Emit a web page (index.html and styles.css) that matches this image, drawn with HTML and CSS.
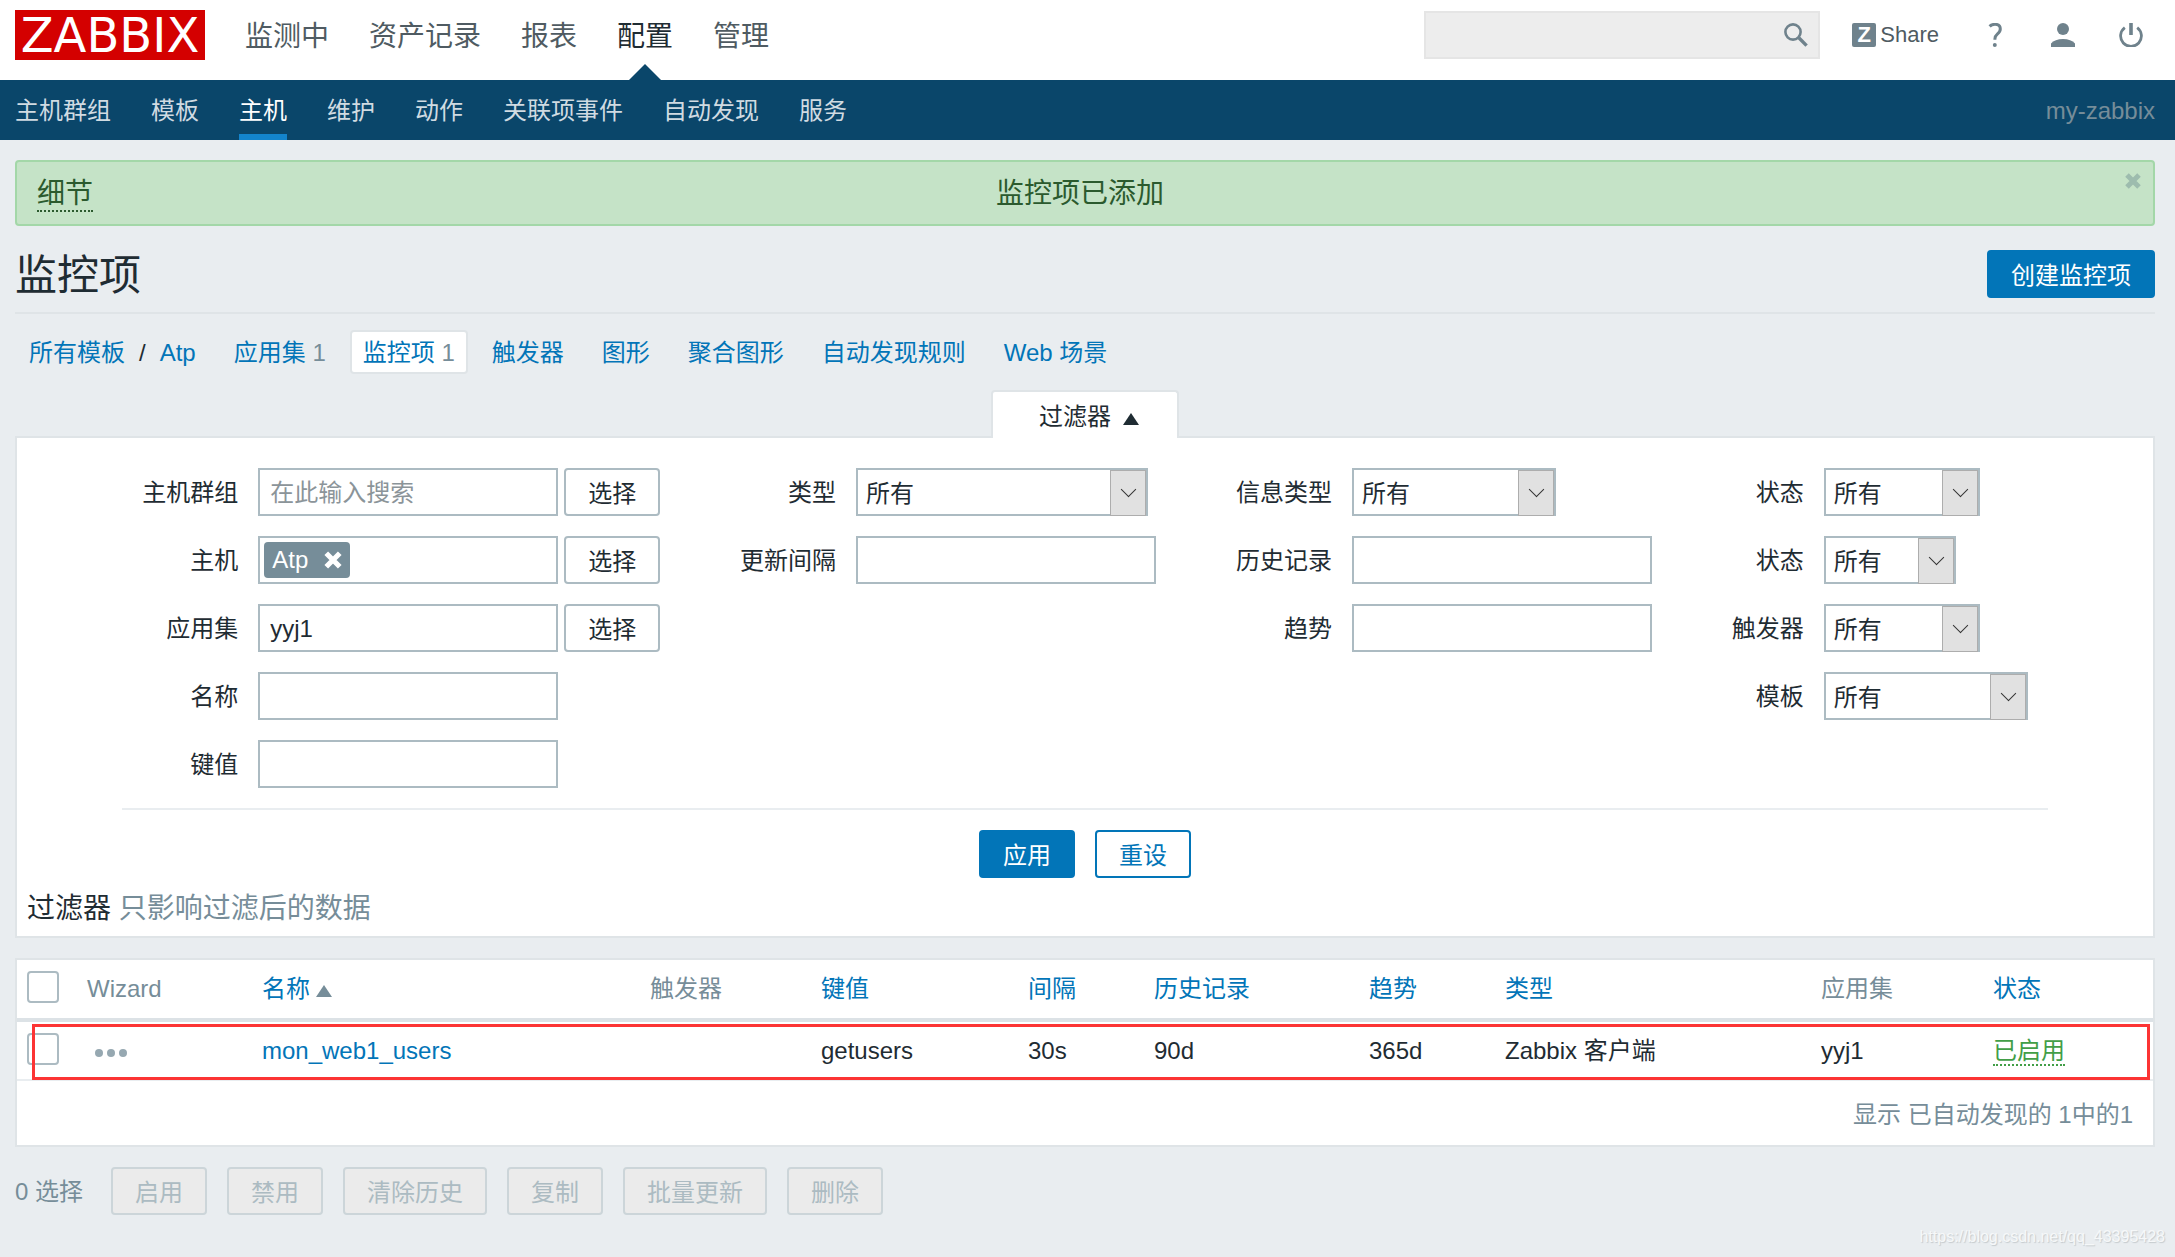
FILE: index.html
```html
<!DOCTYPE html>
<html lang="zh-CN">
<head>
<meta charset="utf-8">
<title>监控项</title>
<meta name="viewport" content="width=device-width, initial-scale=1">
<link rel="stylesheet" href="styles.css">
</head>
<body>
<header>
  <div class="top">
    <a class="logo" href="#">ZABBIX</a>
    <nav class="main-nav" aria-label="主菜单">
      <a href="#">监测中</a>
      <a href="#">资产记录</a>
      <a href="#">报表</a>
      <a class="selected" href="#">配置</a>
      <a href="#">管理</a>
    </nav>
    <form class="search">
      <input type="text" aria-label="搜索">
      <button type="button" aria-label="搜索">
        <svg viewBox="0 0 24 24" width="24" height="24"><circle cx="9" cy="9" r="7.6" fill="none" stroke="currentColor" stroke-width="2.6"/><path d="M14.8 14.8L22.6 22.6" stroke="currentColor" stroke-width="3.4"/></svg>
      </button>
    </form>
    <div class="tools">
      <a class="share" href="#"><span class="z">Z</span>Share</a>
      <a href="#" aria-label="帮助"><svg viewBox="0 0 24 24" width="24" height="24"><path d="M6.6 3.4C8 2 9.900 1.300 12 1.300c3.400 0 5.300 1.800 5.300 4.600 0 2.500-1.300 3.800-3 5.200-1.700 1.400-2.400 2.500-2.400 4.900v.8" fill="none" stroke="currentColor" stroke-width="3"/><circle cx="11.800" cy="22" r="2" fill="currentColor"/></svg></a>
      <a href="#" aria-label="用户"><svg viewBox="0 0 24 24" width="24" height="24" fill="currentColor"><circle cx="12" cy="6" r="6"/><path d="M0 24v-3.400C2.400 17.500 6.800 16 12 16s9.600 1.500 12 4.600V24z"/></svg></a>
      <a href="#" aria-label="退出"><svg viewBox="0 0 24 24" width="24" height="24" fill="none" stroke="currentColor"><path d="M12 0v12" stroke-width="3.600"/><path d="M5.800 4.600A10.400 10.400 0 1 0 18.200 4.600" stroke-width="2.800"/></svg></a>
    </div>
  </div>
  <nav class="sub-nav" aria-label="配置">
    <a href="#">主机群组</a>
    <a href="#">模板</a>
    <a class="selected" href="#">主机</a>
    <a href="#">维护</a>
    <a href="#">动作</a>
    <a href="#">关联项事件</a>
    <a href="#">自动发现</a>
    <a href="#">服务</a>
    <span class="server-name">my-zabbix</span>
  </nav>
</header>

<main>
  <div class="message">
    <a class="details" href="#">细节</a>
    <span class="message-text">监控项已添加</span>
    <button class="close" type="button" aria-label="关闭"><svg viewBox="0 0 16 16" width="16" height="16"><path d="M2 2l12 12M14 2L2 14" stroke="currentColor" stroke-width="5"/></svg></button>
  </div>

  <div class="title-row">
    <h1>监控项</h1>
    <button class="btn primary" type="button">创建监控项</button>
  </div>

  <nav class="crumbs" aria-label="主机导航">
    <span class="path"><a href="#">所有模板</a><span>/</span><a href="#">Atp</a></span>
    <span><a href="#">应用集</a> <sup>1</sup></span>
    <span class="current"><a href="#">监控项</a> <sup>1</sup></span>
    <a href="#">触发器</a>
    <a href="#">图形</a>
    <a href="#">聚合图形</a>
    <a href="#">自动发现规则</a>
    <a href="#">Web 场景</a>
  </nav>

  <div class="filter-tab"><button type="button">过滤器<i class="up"></i></button></div>
  <form class="filter">
    <div class="filter-grid">
      <div class="fields">
        <label for="groups">主机群组</label>
        <div class="pick"><input id="groups" type="text" placeholder="在此输入搜索"><button class="btn" type="button">选择</button></div>
        <label for="hosts">主机</label>
        <div class="pick">
          <div class="multi"><span class="tag">Atp<button type="button" aria-label="移除 Atp"><svg viewBox="0 0 16 16" width="18" height="18"><path d="M2 2l12 12M14 2L2 14" stroke="currentColor" stroke-width="4.600"/></svg></button></span><input id="hosts" type="text"></div>
          <button class="btn" type="button">选择</button>
        </div>
        <label for="app">应用集</label>
        <div class="pick"><input id="app" type="text" value="yyj1"><button class="btn" type="button">选择</button></div>
        <label for="name">名称</label>
        <input id="name" type="text">
        <label for="key">键值</label>
        <input id="key" type="text">
      </div>
      <div class="fields">
        <label for="type">类型</label>
        <span class="select wide"><select id="type"><option>所有</option></select></span>
        <label for="delay">更新间隔</label>
        <input id="delay" type="text">
      </div>
      <div class="fields">
        <label for="info">信息类型</label>
        <span class="select medium"><select id="info"><option>所有</option></select></span>
        <label for="history">历史记录</label>
        <input id="history" type="text">
        <label for="trends">趋势</label>
        <input id="trends" type="text">
      </div>
      <div class="fields">
        <label for="state">状态</label>
        <span class="select small"><select id="state"><option>所有</option></select></span>
        <label for="status">状态</label>
        <span class="select tiny"><select id="status"><option>所有</option></select></span>
        <label for="triggers">触发器</label>
        <span class="select small"><select id="triggers"><option>所有</option></select></span>
        <label for="templates">模板</label>
        <span class="select medium"><select id="templates"><option>所有</option></select></span>
      </div>
    </div>
    <div class="filter-actions">
      <button class="btn primary" type="button">应用</button>
      <button class="btn link" type="button">重设</button>
    </div>
    <p class="note"><b>过滤器</b> 只影响过滤后的数据</p>
  </form>

  <div class="list">
    <table>
      <colgroup><col class="c-check"><col class="c-wizard"><col class="c-name"><col class="c-trig"><col class="c-key"><col class="c-delay"><col class="c-hist"><col class="c-trend"><col class="c-type"><col class="c-app"><col class="c-status"></colgroup>
      <thead>
        <tr>
          <th><input type="checkbox" aria-label="全选"></th>
          <th>Wizard</th>
          <th><a href="#">名称<i class="up"></i></a></th>
          <th>触发器</th>
          <th><a href="#">键值</a></th>
          <th><a href="#">间隔</a></th>
          <th><a href="#">历史记录</a></th>
          <th><a href="#">趋势</a></th>
          <th><a href="#">类型</a></th>
          <th>应用集</th>
          <th><a href="#">状态</a></th>
        </tr>
      </thead>
      <tbody>
        <tr>
          <td><input type="checkbox" aria-label="mon_web1_users"></td>
          <td><button class="dots" type="button" aria-label="菜单"><svg viewBox="0 0 34 8" width="34" height="8" fill="currentColor"><circle cx="4" cy="4" r="4"/><circle cx="16" cy="4" r="4"/><circle cx="28" cy="4" r="4"/></svg></button></td>
          <td><a href="#">mon_web1_users</a></td>
          <td></td>
          <td>getusers</td>
          <td>30s</td>
          <td>90d</td>
          <td>365d</td>
          <td>Zabbix 客户端</td>
          <td>yyj1</td>
          <td><a class="enabled" href="#">已启用</a></td>
        </tr>
      </tbody>
    </table>
    <div class="list-footer">显示 已自动发现的 1中的1</div>
    <div class="highlight"></div>
  </div>

  <div class="actions">
    <span class="count">0 选择</span>
    <button class="btn" type="button" disabled>启用</button>
    <button class="btn" type="button" disabled>禁用</button>
    <button class="btn" type="button" disabled>清除历史</button>
    <button class="btn" type="button" disabled>复制</button>
    <button class="btn" type="button" disabled>批量更新</button>
    <button class="btn" type="button" disabled>删除</button>
  </div>
</main>
<div class="watermark">https://blog.csdn.net/qq_43395428</div>
</body>
</html>
```
FILE: styles.css
```css
* { box-sizing: border-box; }
body {
  margin: 0;
  min-height: 100vh;
  position: relative;
  background: #e9edf0;
  color: #1f2c33;
  font: 24px/32px "Liberation Sans", "Noto Sans CJK SC", sans-serif;
}
a { color: #0275b8; text-decoration: none; }
button, input, select { font: inherit; color: inherit; margin: 0; }
svg { display: block; }

/* header */
.top {
  display: flex;
  align-items: center;
  height: 80px;
  padding: 0 32px 10px 15px;
  background: #fff;
}
.logo {
  width: 190px;
  height: 50px;
  background: #d40000;
  color: #fff;
  font: 48px/50px "DejaVu Sans", sans-serif;
  text-align: center;
}
.main-nav { display: flex; gap: 40px; margin-left: 40px; padding-top: 4px; font-size: 28px; line-height: 70px; }
.main-nav a { position: relative; color: #4f5b62; }
.main-nav .selected { color: #1f2c33; }
.main-nav .selected::after {
  content: "";
  position: absolute;
  left: 50%;
  bottom: -8px;
  margin-left: -16px;
  border: solid transparent;
  border-width: 0 16px 16px;
  border-bottom-color: #0a466a;
}
.search {
  display: flex;
  align-items: center;
  width: 396px;
  height: 48px;
  margin-left: auto;
  padding-right: 10px;
  background: #ededed;
  border: 2px solid #e5e5e5;
}
.search input { flex: 1; min-width: 0; border: 0; background: none; }
.search button { padding: 0; border: 0; background: none; color: #6f828c; }
.tools { display: flex; align-items: center; gap: 44px; margin-left: 32px; }
.tools a { color: #6f828c; }
.tools .share { display: flex; align-items: center; gap: 4px; font-size: 22px; line-height: 24px; color: #4f5b62; }
.z {
  width: 24px;
  height: 24px;
  border-radius: 2px;
  background: #6f828c;
  color: #fff;
  font-weight: bold;
  text-align: center;
}
.sub-nav {
  display: flex;
  gap: 40px;
  height: 60px;
  padding: 0 20px 0 15px;
  background: #0a466a;
  line-height: 62px;
}
.sub-nav a { color: #d0dbe2; }
.sub-nav .selected { color: #fff; box-shadow: inset 0 -6px #1384cc; }
.server-name { margin-left: auto; color: #768d99; }

/* message and title */
main { padding: 20px 20px 20px 15px; }
.message {
  display: flex;
  justify-content: center;
  align-items: center;
  position: relative;
  height: 66px;
  padding: 2px 10px 0 0;
  border: 2px solid #a3d7a8;
  border-radius: 4px;
  background: #c5e3c7;
  color: #2b5a2e;
  font-size: 28px;
}
.details {
  position: absolute;
  left: 20px;
  top: 16px;
  color: inherit;
  border-bottom: 2px dotted;
}
.close { position: absolute; right: 12px; top: 11px; padding: 0; border: 0; background: none; color: #9dbcae; }
.title-row {
  display: flex;
  justify-content: space-between;
  align-items: center;
  height: 88px;
  padding-top: 10px;
  border-bottom: 2px solid #dfe4e7;
}
h1 { margin: 0; padding-top: 4px; font-size: 42px; line-height: 48px; font-weight: normal; }
.btn {
  height: 48px;
  padding: 4px 22px 0;
  border: 2px solid #acbbc2;
  border-radius: 4px;
  background: #fff;
  line-height: 32px;
  white-space: nowrap;
}
.primary { background: #0275b8; border-color: #0275b8; color: #fff; }
.link { border-color: #0275b8; color: #0275b8; }
.btn:disabled { background: #ebebeb; border-color: #ccd5d9; color: #acbbc2; }

/* breadcrumbs */
.crumbs { display: flex; align-items: center; gap: 38px; padding: 16px 14px; }
.crumbs > * { padding-top: 2px; }
.path { display: flex; gap: 14px; }
sup { font-size: inherit; line-height: inherit; vertical-align: baseline; color: #768d99; }
.crumbs .current {
  margin: 0 -14px;
  padding: 5px 11px 3px;
  border: 2px solid #dfe4e7;
  border-radius: 4px;
  background: #fff;
}

/* filter */
.up {
  display: inline-block;
  border: solid transparent;
  border-width: 0 8px 12px;
  border-bottom-color: currentColor;
}
.filter-tab { display: flex; justify-content: center; }
.filter-tab button {
  height: 48px;
  margin-bottom: -2px;
  padding: 4px 38px 0 46px;
  border: 2px solid #dfe4e7;
  border-bottom: 0;
  border-radius: 4px 4px 0 0;
  background: #fff;
  position: relative;
}
.filter-tab .up { margin-left: 12px; }
.filter { padding: 30px 10px 10px; border: 2px solid #dfe4e7; background: #fff; }
.filter-grid {
  display: flex;
  justify-content: space-between;
  align-items: flex-start;
  gap: 20px;
  width: 91%;
  margin: 0 auto;
  padding: 0 20px 20px;
  border-bottom: 2px solid #e9edf0;
}
.fields { display: grid; grid-template-columns: auto auto; gap: 20px; justify-items: start; align-items: center; }
.fields label { justify-self: end; padding-top: 2px; }
.fields input[type="text"], .multi {
  width: 300px;
  height: 48px;
  padding: 2px 10px 0;
  border: 2px solid #acbbc2;
  background: #fff;
}
.fields ::placeholder { color: #8b9499; opacity: 1; }
.pick { display: flex; gap: 6px; }
.fields .multi { display: flex; align-items: center; padding: 0 4px; }
.fields .multi input { flex: 1; width: 0; min-width: 0; height: 40px; border: 0; }
.tag {
  display: flex;
  align-items: center;
  gap: 16px;
  height: 36px;
  padding: 0 8px;
  border-radius: 4px;
  background: #768d99;
  color: #fff;
}
.tag button { padding: 0; border: 0; background: none; }
.select { position: relative; display: block; }
.select select {
  appearance: none;
  display: block;
  width: 100%;
  height: 48px;
  padding: 4px 40px 0 8px;
  border: 2px solid #acbbc2;
  border-radius: 0;
  background: #fff;
}
.select::before {
  content: "";
  position: absolute;
  right: 2px;
  top: 2px;
  width: 34px;
  height: 44px;
  border: 1px solid #adadad;
  background: #e1e1e1;
  pointer-events: none;
}
.select::after {
  content: "";
  position: absolute;
  right: 14px;
  top: 16px;
  width: 10px;
  height: 10px;
  border: solid #333;
  border-width: 0 1px 1px 0;
  transform: rotate(45deg);
  pointer-events: none;
}
.wide { width: 292px; }
.medium { width: 204px; }
.small { width: 156px; }
.tiny { width: 132px; }
.filter-actions { display: flex; justify-content: center; gap: 20px; padding: 20px 0 14px; }
.note { margin: 0; font-size: 28px; line-height: 34px; color: #768d99; }
.note b { font-weight: normal; color: #1f2c33; }

/* list */
.list { position: relative; margin-top: 20px; border: 2px solid #dfe4e7; background: #fff; }
table { width: 100%; table-layout: fixed; border-collapse: separate; border-spacing: 0; }
th, td { height: 59px; padding: 0 10px; text-align: left; font-weight: normal; white-space: nowrap; }
th { height: 62px; border-bottom: 4px solid #dce2e6; color: #768d99; }
td { border-bottom: 2px solid #e9edf0; }
th .up { margin-left: 6px; color: #768d99; }
.c-check { width: 60px; }
.c-wizard { width: 175px; }
.c-name { width: 388px; }
.c-trig { width: 171px; }
.c-key { width: 207px; }
.c-delay { width: 126px; }
.c-hist { width: 215px; }
.c-trend { width: 136px; }
.c-type { width: 316px; }
.c-app { width: 172px; }
.c-status { width: 170px; }
input[type="checkbox"] {
  appearance: none;
  display: block;
  width: 32px;
  height: 32px;
  margin-bottom: 4px;
  border: 2px solid #acbbc2;
  border-radius: 4px;
  background: #fff;
}
.dots { display: block; padding: 4px 8px 0; border: 0; background: none; color: #96a8b1; }
.enabled { color: #429e47; border-bottom: 2px dotted; }
.list-footer { padding: 18px 20px 14px; text-align: right; color: #768d99; }
.highlight { position: absolute; left: 15px; right: 3px; top: 64px; height: 56px; border: 3px solid #fc3434; }

.actions { display: flex; flex-wrap: wrap; align-items: center; gap: 20px; margin-top: 20px; }
.count { margin-right: 8px; padding-top: 2px; color: #768d99; }
.watermark {
  position: absolute;
  right: 10px;
  bottom: 8px;
  font-size: 16px;
  line-height: 24px;
  color: #f6f8f9;
  text-shadow: 1px 1px 1px #c4cacd;
}
```
